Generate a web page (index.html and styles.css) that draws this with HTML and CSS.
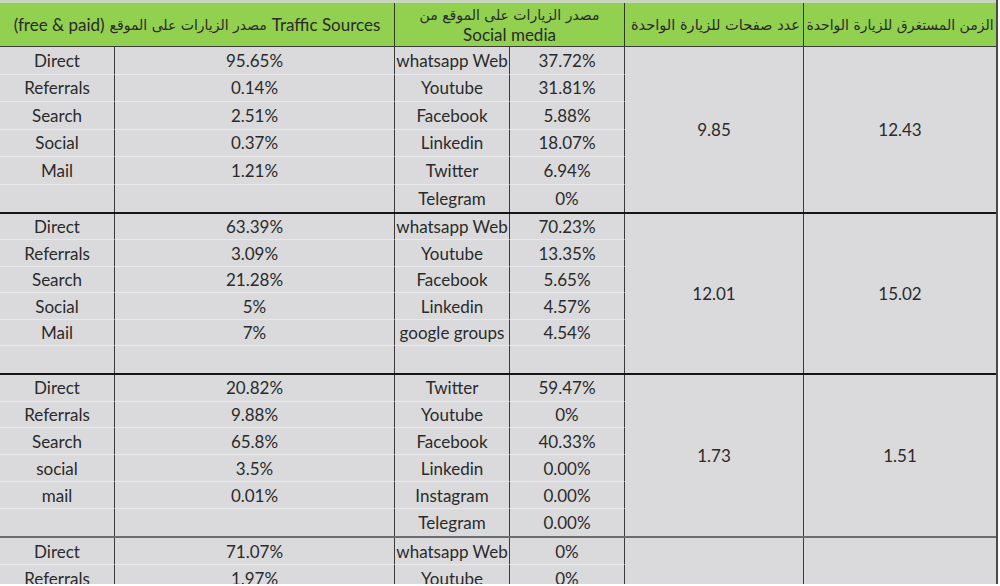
FILE: index.html
```html
<!DOCTYPE html>
<html lang="ar">
<head>
<meta charset="utf-8">
<title>Traffic Sources</title>
<link rel="stylesheet" href="styles.css">
</head>
<body>
<div class="sheet">
  <div class="strip"></div>
  <div class="head">
    <div class="hcell h-traffic"><span dir="ltr">(free &amp; paid)</span> <span dir="rtl" class="ar">مصدر الزيارات على الموقع</span> <span dir="ltr">Traffic Sources</span></div>
    <div class="hcell h-social"><span dir="rtl" class="ar">مصدر الزيارات على الموقع من</span><span>Social media</span></div>
    <div class="hcell h-pages"><span dir="rtl" class="ar">عدد صفحات للزيارة الواحدة</span></div>
    <div class="hcell h-time"><span dir="rtl" class="ar">الزمن المستغرق للزيارة الواحدة</span></div>
  </div>

  <div class="group g1">
    <div class="c">Direct</div><div class="c">95.65%</div><div class="c">whatsapp Web</div><div class="c">37.72%</div>
    <div class="m m5">9.85</div><div class="m m6">12.43</div>
    <div class="c">Referrals</div><div class="c">0.14%</div><div class="c">Youtube</div><div class="c">31.81%</div>
    <div class="c">Search</div><div class="c">2.51%</div><div class="c">Facebook</div><div class="c">5.88%</div>
    <div class="c">Social</div><div class="c">0.37%</div><div class="c">Linkedin</div><div class="c">18.07%</div>
    <div class="c">Mail</div><div class="c">1.21%</div><div class="c">Twitter</div><div class="c">6.94%</div>
    <div class="c last"></div><div class="c last"></div><div class="c last">Telegram</div><div class="c last">0%</div>
  </div>

  <div class="group g2">
    <div class="c">Direct</div><div class="c">63.39%</div><div class="c">whatsapp Web</div><div class="c">70.23%</div>
    <div class="m m5">12.01</div><div class="m m6">15.02</div>
    <div class="c">Referrals</div><div class="c">3.09%</div><div class="c">Youtube</div><div class="c">13.35%</div>
    <div class="c">Search</div><div class="c">21.28%</div><div class="c">Facebook</div><div class="c">5.65%</div>
    <div class="c">Social</div><div class="c">5%</div><div class="c">Linkedin</div><div class="c">4.57%</div>
    <div class="c">Mail</div><div class="c">7%</div><div class="c">google groups</div><div class="c">4.54%</div>
    <div class="c last"></div><div class="c last"></div><div class="c last"></div><div class="c last"></div>
  </div>

  <div class="group g3">
    <div class="c">Direct</div><div class="c">20.82%</div><div class="c">Twitter</div><div class="c">59.47%</div>
    <div class="m m5">1.73</div><div class="m m6">1.51</div>
    <div class="c">Referrals</div><div class="c">9.88%</div><div class="c">Youtube</div><div class="c">0%</div>
    <div class="c">Search</div><div class="c">65.8%</div><div class="c">Facebook</div><div class="c">40.33%</div>
    <div class="c">social</div><div class="c">3.5%</div><div class="c">Linkedin</div><div class="c">0.00%</div>
    <div class="c">mail</div><div class="c">0.01%</div><div class="c">Instagram</div><div class="c">0.00%</div>
    <div class="c last"></div><div class="c last"></div><div class="c last">Telegram</div><div class="c last">0.00%</div>
  </div>

  <div class="group g4">
    <div class="c">Direct</div><div class="c">71.07%</div><div class="c">whatsapp Web</div><div class="c">0%</div>
    <div class="m m5"></div><div class="m m6"></div>
    <div class="c">Referrals</div><div class="c">1.97%</div><div class="c">Youtube</div><div class="c">0%</div>
  </div>
</div>
</body>
</html>
```

FILE: styles.css
```css
html, body {
  margin: 0;
  padding: 0;
  background: #ffffff;
}

body {
  width: 1000px;
  height: 586px;
  overflow: hidden;
}

.sheet {
  width: 998px;
  height: 584px;
  overflow: hidden;
  display: flex;
  flex-direction: column;
  background: #dadadc;
  font-family: Lato, "DejaVu Sans", sans-serif;
  font-size: 17px;
  color: #2a2a2a;
  border-right: 2px solid #4a4a4a;
  box-sizing: border-box;
}

.ar {
  font-family: "DejaVu Sans", sans-serif;
}

.strip {
  flex: 0 0 3px;
  background: #c9d6bd;
}

.head {
  flex: 0 0 44px;
  display: grid;
  grid-template-columns: 395px 230px 179px 1fr;
  background: #92d050;
  border-bottom: 1px solid #3c3c3c;
  box-sizing: border-box;
}

.hcell {
  display: flex;
  align-items: center;
  justify-content: center;
  border-right: 1px solid #2e3a26;
  white-space: nowrap;
  overflow: hidden;
}

.hcell:last-child {
  border-right: none;
}

.h-traffic .ar {
  font-size: 14px;
  margin: 0 5px;
}

.h-social {
  flex-direction: column;
  line-height: 20px;
}

.h-social .ar,
.h-time .ar {
  font-size: 14px;
}

.h-pages {
  justify-content: flex-end;
  padding-right: 3px;
}

.h-pages .ar {
  font-size: 14.6px;
}

.group {
  display: grid;
  grid-template-columns: 115px 280px 115px 115px 179px 1fr;
  flex: 0 0 auto;
}

.g1 { grid-template-rows: repeat(6, 27.5px); }

.g2 {
  grid-template-rows: repeat(6, 26.45px);
  border-top: 2px solid #151515;
}

.g3 {
  grid-template-rows: repeat(6, 26.9px);
  border-top: 2px solid #151515;
}

.g4 {
  grid-template-rows: repeat(6, 27.5px);
  border-top: 2px solid #6c6c6c;
}

.c {
  display: flex;
  align-items: center;
  justify-content: center;
  white-space: nowrap;
  border-bottom: 1px solid #e9e9ea;
  border-right: 1px solid #3a3a3a;
  box-sizing: border-box;
}

.c.last {
  border-bottom: none;
}

.m {
  grid-row: 1 / span 6;
  display: flex;
  align-items: center;
  justify-content: center;
}

.m5 {
  grid-column: 5;
  border-right: 1px solid #3a3a3a;
}

.m6 {
  grid-column: 6;
}
```
